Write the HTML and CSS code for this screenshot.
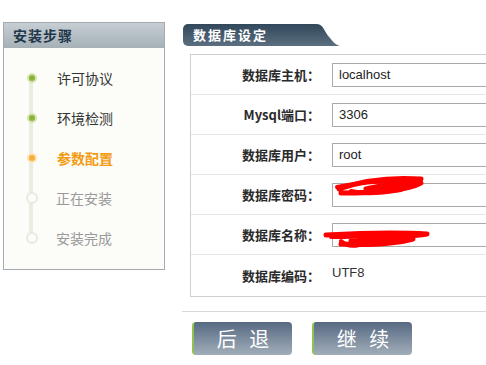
FILE: index.html
```html
<!DOCTYPE html>
<html lang="zh">
<head>
<meta charset="utf-8">
<title>安装</title>
<link rel="stylesheet" href="styles.css">
</head>
<body>
<div class="page">
  <aside class="steps">
    <div class="steps-head">安装步骤</div>
    <ul class="step-list">
      <li class="step done"><span class="dot"></span><span class="label">许可协议</span></li>
      <li class="step done"><span class="dot"></span><span class="label">环境检测</span></li>
      <li class="step current"><span class="dot"></span><span class="label">参数配置</span></li>
      <li class="step pending"><span class="dot"></span><span class="label">正在安装</span></li>
      <li class="step pending"><span class="dot"></span><span class="label">安装完成</span></li>
    </ul>
  </aside>
  <main class="main">
    <div class="tab">
      <div class="tab-body">数据库设定</div>
      <svg class="tab-tail" width="30" height="22" viewBox="0 0 30 22">
        <defs>
          <linearGradient id="tg" x1="0" y1="0" x2="0" y2="1">
            <stop offset="0" stop-color="#31475a"/>
            <stop offset="1" stop-color="#5b6f80"/>
          </linearGradient>
        </defs>
        <path d="M0 0 H6 C14 0 14 8 20 14 C24 19 26 21 30 22 H0 Z" fill="url(#tg)"/>
      </svg>
    </div>
    <div class="form">
      <div class="row"><div class="lbl">数据库主机：</div><div class="val"><span class="input">localhost</span></div></div>
      <div class="row"><div class="lbl">Mysql端口：</div><div class="val"><span class="input">3306</span></div></div>
      <div class="row"><div class="lbl">数据库用户：</div><div class="val"><span class="input">root</span></div></div>
      <div class="row"><div class="lbl">数据库密码：</div><div class="val"><span class="input"></span></div></div>
      <div class="row"><div class="lbl">数据库名称：</div><div class="val"><span class="input"></span></div></div>
      <div class="row last"><div class="lbl">数据库编码：</div><div class="val"><span class="plain">UTF8</span></div></div>
      <svg class="scribble" width="296" height="242" viewBox="0 0 296 242">
        <path d="M148 134 C170 126 200 122 230 124 C215 128 190 130 175 134 C195 132 215 130 230 128 C215 136 180 138 150 138" fill="none" stroke="#f00" stroke-width="5" stroke-linecap="round" stroke-linejoin="round"/>
        <path d="M146 132 C165 128 185 126 205 127 M160 136 C175 140 190 138 210 135" fill="none" stroke="#f00" stroke-width="4" stroke-linecap="round"/>
        <path d="M135 180 C170 178 205 177 236 179 C215 182 185 184 160 186 C180 186 200 186 222 184 C200 190 175 190 150 189" fill="none" stroke="#f00" stroke-width="5" stroke-linecap="round" stroke-linejoin="round"/>
        <path d="M140 182 C160 182 180 181 200 181 M150 186 C154 190 160 192 168 190" fill="none" stroke="#f00" stroke-width="4" stroke-linecap="round"/>
      </svg>
    </div>
    <div class="sep"></div>
    <div class="buttons">
      <button class="btn">后 退</button>
      <button class="btn">继 续</button>
    </div>
  </main>
</div>
</body>
</html>
```
FILE: styles.css
```css
html, body {
  margin: 0;
  padding: 0;
  background: #fff;
  overflow: hidden;
}
body {
  width: 486px;
  height: 365px;
  font-family: "Noto Sans CJK SC", "Liberation Sans", sans-serif;
}
.page {
  display: flex;
  align-items: flex-start;
}
.steps {
  flex: none;
  margin: 22px 0 0 3px;
  width: 160px;
  height: 246px;
  border: 1px solid #a3abb0;
  background: #fcfdf9;
  display: flex;
  flex-direction: column;
}
.steps-head {
  height: 25px;
  line-height: 25px;
  padding-left: 9px;
  background: linear-gradient(#c6ced3, #a5b0b7);
  color: #22364a;
  font-size: 14px;
  font-weight: bold;
  letter-spacing: 1px;
}
.step-list {
  list-style: none;
  margin: 0;
  padding: 10px 0 0 0;
  position: relative;
}
.step-list::before {
  content: "";
  position: absolute;
  left: 25px;
  top: 28px;
  height: 162px;
  width: 4px;
  background: #e9eee0;
}
.step {
  height: 40px;
  display: flex;
  align-items: center;
  position: relative;
}
.dot {
  width: 6px;
  height: 6px;
  margin-left: 23px;
  border-radius: 50%;
  border: 2px solid #d6e6b2;
  background: #8ab537;
  position: relative;
}
.step.current .dot {
  border-color: #fde2b4;
  background: #f6ae3c;
}
.step.pending .dot {
  width: 8px;
  height: 8px;
  border: 2px solid #e6eadf;
  background: #fcfdf9;
  margin-left: 22px;
}
.label {
  margin-left: 20px;
  font-size: 14px;
  color: #333;
}
.step.pending .label {
  margin-left: 18px;
}
.step.current .label {
  color: #f39a10;
  font-weight: bold;
}
.step.pending .label {
  color: #9a9a9a;
}
.main {
  margin: 24px 0 0 18px;
  flex: 1;
  min-width: 0;
}
.tab {
  display: flex;
  height: 22px;
}
.tab-body {
  width: 127px;
  height: 22px;
  line-height: 22px;
  padding-left: 10px;
  box-sizing: border-box;
  background: linear-gradient(#31475a, #5b6f80);
  border-radius: 5px 0 0 5px;
  color: #fff;
  font-size: 13px;
  font-weight: bold;
  letter-spacing: 2px;
}
.tab-tail {
  display: block;
}
.form {
  margin: 8px 0 0 7px;
  border: 1px solid #cfcfcf;
  border-right: none;
  position: relative;
}
.row {
  display: flex;
  align-items: center;
  height: 40px;
  border-bottom: 1px solid #e6e6e6;
  box-sizing: border-box;
}
.row.last {
  border-bottom: none;
  height: 41px;
}
.lbl {
  width: 129px;
  text-align: right;
  font-size: 13px;
  font-weight: bold;
  color: #2a2a2a;
  flex: none;
}
.val {
  margin-left: 12px;
  flex: 1;
}
.input {
  display: block;
  height: 24px;
  line-height: 22px;
  box-sizing: border-box;
  border: 1px solid #a9a9a9;
  border-right: none;
  padding-left: 6px;
  font-family: "Liberation Sans", sans-serif;
  font-size: 13px;
  color: #222;
}
.plain {
  display: block;
  margin-top: -6px;
  font-family: "Liberation Sans", sans-serif;
  font-size: 13px;
  color: #333;
}
.scribble {
  position: absolute;
  left: 0;
  top: 0;
  pointer-events: none;
}
.sep {
  margin: 14px 0 0 -1px;
  height: 1px;
  background: #d8d8d8;
}
.buttons {
  display: flex;
  gap: 20px;
  margin: 10px 0 0 9px;
}
.btn {
  width: 100px;
  height: 33px;
  padding: 0 0 0 4px;
  border: none;
  border-left: 2px solid #8fc34f;
  border-radius: 4px;
  background: linear-gradient(#576a83, #a1adb9);
  color: #fff;
  font-family: "Noto Sans CJK SC", sans-serif;
  font-size: 20px;
  letter-spacing: 4px;
  line-height: 33px;
}
```
